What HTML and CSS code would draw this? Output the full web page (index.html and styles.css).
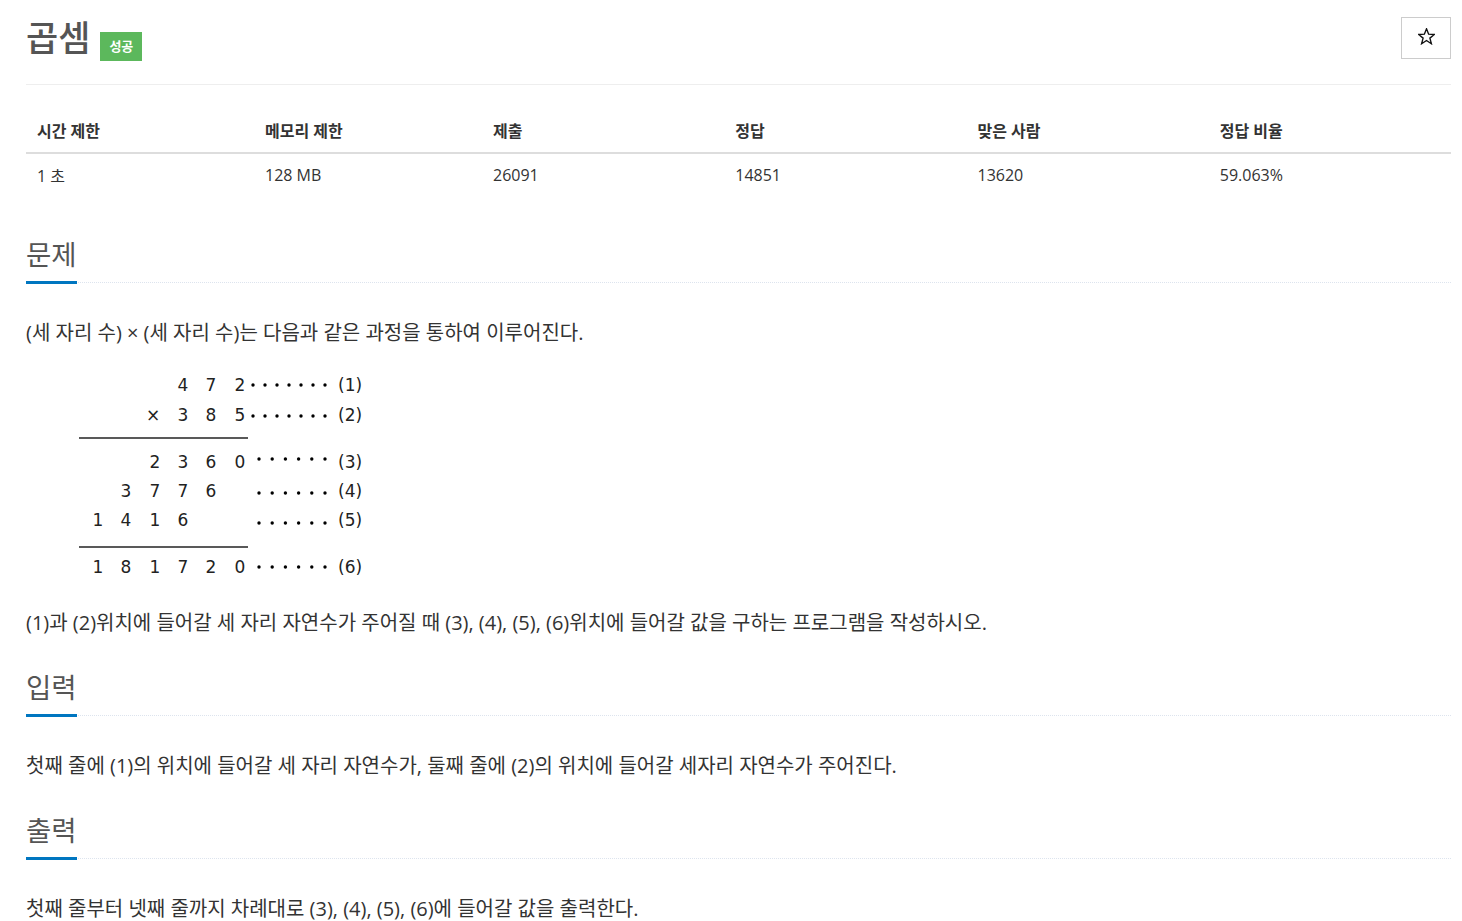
FILE: index.html
```html
<!DOCTYPE html>
<html lang="ko">
<head>
<meta charset="utf-8">
<title>곱셈</title>
<link rel="stylesheet" href="styles.css">
</head>
<body>
<div class="container">
  <div class="page-header">
    <h1 class="title"><span class="title-text">곱셈</span><span class="label-success">성공</span></h1>
    <button class="star-btn" type="button" aria-label="즐겨찾기">
      <svg width="17" height="17" viewBox="0 0 16 16" xmlns="http://www.w3.org/2000/svg">
        <polygon points="8,0.8 10,5.8 15.4,6.1 11.2,9.5 12.6,14.8 8,11.8 3.4,14.8 4.8,9.5 0.6,6.1 6,5.8" fill="none" stroke="#111" stroke-width="1.3" stroke-linejoin="miter"/>
      </svg>
    </button>
  </div>

  <table class="info">
    <thead>
      <tr>
        <th class="w16">시간 제한</th>
        <th class="w16">메모리 제한</th>
        <th class="w17">제출</th>
        <th class="w17">정답</th>
        <th class="w17">맞은 사람</th>
        <th class="w17">정답 비율</th>
      </tr>
    </thead>
    <tbody>
      <tr>
        <td>1 초</td>
        <td>128 MB</td>
        <td>26091</td>
        <td>14851</td>
        <td>13620</td>
        <td>59.063%</td>
      </tr>
    </tbody>
  </table>

  <section class="problem-section first">
    <div class="headline"><h2>문제</h2></div>
    <div class="problem-text">
      <p>(세 자리 수) × (세 자리 수)는 다음과 같은 과정을 통하여 이루어진다.</p>
      <svg class="figure" width="360" height="243" viewBox="0 0 360 243" xmlns="http://www.w3.org/2000/svg">
        <g class="digits">
          <text x="157" y="26">4</text><text x="185" y="26">7</text><text x="214" y="26">2</text>
          <text x="127" y="56">×</text><text x="157" y="56">3</text><text x="185" y="56">8</text><text x="214" y="56">5</text>
          <text x="129" y="103">2</text><text x="157" y="103">3</text><text x="185" y="103">6</text><text x="214" y="103">0</text>
          <text x="100" y="132">3</text><text x="129" y="132">7</text><text x="157" y="132">7</text><text x="185" y="132">6</text>
          <text x="72" y="161">1</text><text x="100" y="161">4</text><text x="129" y="161">1</text><text x="157" y="161">6</text>
          <text x="72" y="208">1</text><text x="100" y="208">8</text><text x="129" y="208">1</text><text x="157" y="208">7</text><text x="185" y="208">2</text><text x="214" y="208">0</text>
        </g>
        <g class="dots">
          <circle cx="227" cy="20" r="1.7"/><circle cx="239" cy="20" r="1.7"/><circle cx="251" cy="20" r="1.7"/><circle cx="263" cy="20" r="1.7"/><circle cx="275" cy="20" r="1.7"/><circle cx="287" cy="20" r="1.7"/><circle cx="299" cy="20" r="1.7"/>
          <circle cx="227" cy="51" r="1.7"/><circle cx="239" cy="51" r="1.7"/><circle cx="251" cy="51" r="1.7"/><circle cx="263" cy="51" r="1.7"/><circle cx="275" cy="51" r="1.7"/><circle cx="287" cy="51" r="1.7"/><circle cx="299" cy="51" r="1.7"/>
          <circle cx="233" cy="94" r="1.7"/><circle cx="246.2" cy="94" r="1.7"/><circle cx="259.4" cy="94" r="1.7"/><circle cx="272.6" cy="94" r="1.7"/><circle cx="285.8" cy="94" r="1.7"/><circle cx="299" cy="94" r="1.7"/>
          <circle cx="233" cy="128" r="1.7"/><circle cx="246.2" cy="128" r="1.7"/><circle cx="259.4" cy="128" r="1.7"/><circle cx="272.6" cy="128" r="1.7"/><circle cx="285.8" cy="128" r="1.7"/><circle cx="299" cy="128" r="1.7"/>
          <circle cx="233" cy="158" r="1.7"/><circle cx="246.2" cy="158" r="1.7"/><circle cx="259.4" cy="158" r="1.7"/><circle cx="272.6" cy="158" r="1.7"/><circle cx="285.8" cy="158" r="1.7"/><circle cx="299" cy="158" r="1.7"/>
          <circle cx="233" cy="202" r="1.7"/><circle cx="246.2" cy="202" r="1.7"/><circle cx="259.4" cy="202" r="1.7"/><circle cx="272.6" cy="202" r="1.7"/><circle cx="285.8" cy="202" r="1.7"/><circle cx="299" cy="202" r="1.7"/>
        </g>
        <g class="labels">
          <text x="312" y="26">(1)</text>
          <text x="312" y="56">(2)</text>
          <text x="312" y="103">(3)</text>
          <text x="312" y="132">(4)</text>
          <text x="312" y="161">(5)</text>
          <text x="312" y="208">(6)</text>
        </g>
        <line x1="53" y1="73" x2="222" y2="73" class="rule"/>
        <line x1="53" y1="182" x2="222" y2="182" class="rule"/>
      </svg>
      <p>(1)과 (2)위치에 들어갈 세 자리 자연수가 주어질 때 (3), (4), (5), (6)위치에 들어갈 값을 구하는 프로그램을 작성하시오.</p>
    </div>
  </section>

  <section class="problem-section">
    <div class="headline"><h2>입력</h2></div>
    <div class="problem-text">
      <p>첫째 줄에 (1)의 위치에 들어갈 세 자리 자연수가, 둘째 줄에 (2)의 위치에 들어갈 세자리 자연수가 주어진다.</p>
    </div>
  </section>

  <section class="problem-section">
    <div class="headline"><h2>출력</h2></div>
    <div class="problem-text">
      <p>첫째 줄부터 넷째 줄까지 차례대로 (3), (4), (5), (6)에 들어갈 값을 출력한다.</p>
    </div>
  </section>
</div>
</body>
</html>
```

FILE: styles.css
```css
html, body {
  margin: 0;
  padding: 0;
  background: #fff;
}
body {
  font-family: "Open Sans", "Noto Sans CJK KR", sans-serif;
  color: #333;
  font-size: 16px;
}
.container {
  padding: 0 11px 0 26px;
}
.page-header {
  display: flex;
  align-items: flex-start;
  justify-content: space-between;
  border-bottom: 1px solid #eee;
  padding-top: 17px;
  height: 85px;
  box-sizing: border-box;
}
.title {
  margin: 0;
  font-size: 35px;
  font-weight: 500;
  line-height: 42px;
  color: #555;
  display: flex;
  align-items: flex-start;
}
.label-success {
  display: inline-block;
  margin-left: 10px;
  margin-top: 15px;
  background: #5cb85c;
  color: #fff;
  font-size: 13px;
  font-weight: 700;
  line-height: 29px;
  height: 29px;
  padding: 0 9px;
}
.star-btn {
  width: 50px;
  height: 42px;
  border: 1px solid #ccc;
  background: #fff;
  padding: 0;
  display: flex;
  align-items: center;
  justify-content: center;
}
.star-btn svg {
  display: block;
  margin-top: -4px;
}
.info {
  width: 100%;
  border-collapse: collapse;
  margin-top: 23px;
}
.info th, .info td {
  text-align: left;
  padding: 0 11px;
  font-size: 16px;
}
.info th {
  font-weight: 700;
  height: 44px;
  border-bottom: 2px solid #ddd;
  vertical-align: middle;
}
.info td {
  height: 42px;
  vertical-align: middle;
}
.w16 { width: 16%; }
.w17 { width: 17%; }
.problem-section.first {
  margin-top: 40px;
}
.headline {
  border-bottom: 1px dotted #dde4ee;
}
.headline h2 {
  display: inline-block;
  margin: 0 0 -2px;
  font-size: 27.5px;
  font-weight: 400;
  line-height: 38px;
  color: #555;
  border-bottom: 3px solid #0076c0;
  padding-bottom: 7px;
}
.problem-text {
  display: flex;
  flex-direction: column;
  align-items: flex-start;
  padding: 35px 0 31px;
}
.problem-text p {
  margin: 0;
  font-size: 20px;
  line-height: 30px;
}
.figure {
  display: block;
  margin-top: 17px;
}
.figure .digits text {
  font-family: "DejaVu Sans", sans-serif;
  font-size: 17px;
  fill: #222;
  text-anchor: middle;
}
.figure .labels text {
  font-family: "DejaVu Sans", sans-serif;
  font-size: 17px;
  fill: #222;
}
.figure .dots circle {
  fill: #000;
}
.rule {
  stroke: #222;
  stroke-width: 1.5;
}
```
